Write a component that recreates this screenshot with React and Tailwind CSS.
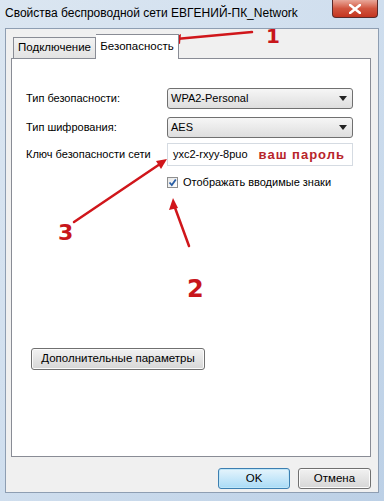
import React from 'react';

const font = { fontFamily: '"Liberation Sans", Arial, sans-serif' };
const hand = { fontFamily: '"DejaVu Sans", sans-serif' };

const Select = ({ value }) => (
    <div className="flex items-center justify-between h-[21px] w-[186px] rounded-[3px] border border-[#707070] bg-gradient-to-b from-[#f6f6f6] to-[#dedede] pl-[3px] pr-[5px]">
        <span className="text-[11px] text-black leading-none whitespace-nowrap">{value}</span>
        <svg width="8" height="5" viewBox="0 0 8 5"><path d="M0 0h8L4 5z" fill="#222" /></svg>
    </div>
);

const WinButton = ({ children, primary, className = '' }) => (
    <button className={`flex items-center justify-center h-[21px] rounded-[3px] border text-[11.5px] text-black leading-none whitespace-nowrap ${primary ? 'border-[#3c7fb1] bg-gradient-to-b from-[#e5f4fc] to-[#a9dbf6] shadow-[inset_0_0_0_1px_#bfe6f8]' : 'border-[#707070] bg-gradient-to-b from-[#f2f2f2] to-[#d6d6d6] shadow-[inset_0_0_0_1px_#fbfbfb]'} ${className}`}>
        {children}
    </button>
);

const Annotations = () => (
    <div className="absolute inset-0 pointer-events-none">
        <svg width="384" height="501" className="absolute inset-0">
            <g stroke="#d0161b" strokeWidth="2.5" strokeLinecap="round" fill="none">
                <path d="M252 32 L176 39" />
                <path d="M189 246 L174 205" />
                <path d="M74 222 L160 164" />
            </g>
            <g fill="#d0161b">
                <path d="M169 40 L181 34 L180 44 z" />
                <path d="M173 198 L169 210 L178 208 z" />
                <path d="M167 159 L161 169 L156 161 z" />
            </g>
        </svg>
        <span className="absolute left-[266px] top-[26px] text-[#c8161b] text-[20px] font-bold leading-none" style={hand}>1</span>
        <span className="absolute left-[187px] top-[277px] text-[#c8161b] text-[24px] font-bold leading-none" style={hand}>2</span>
        <span className="absolute left-[58px] top-[222px] text-[#c8161b] text-[22px] font-bold leading-none" style={hand}>3</span>
    </div>
);

export default function App() {
    return (
        <div className="relative w-[384px] h-[501px] overflow-hidden flex flex-col bg-gradient-to-br from-[#dbe6f1] via-[#cfdeee] to-[#bcd0e6]" style={font}>
            {/* title bar */}
            <div className="h-[28px] flex items-start justify-between pl-[5px]">
                <span className="mt-[7px] text-[12px] text-black leading-none whitespace-nowrap">Свойства беспроводной сети ЕВГЕНИЙ-ПК_Network</span>
                <div className="mr-[6px] w-[46px] h-[18px] rounded-b-[4px] border border-t-0 border-[#5a2a2a] bg-gradient-to-b from-[#e8a79a] via-[#d1553f] to-[#c3341f] flex items-center justify-center">
                    <svg width="12" height="10" viewBox="0 0 12 10">
                        <path d="M1 1 L11 9 M11 1 L1 9" stroke="#fff" strokeWidth="2.6" strokeLinecap="square" />
                    </svg>
                </div>
            </div>

            {/* client area */}
            <div className="mx-[5px] mb-[8px] flex-1 flex flex-col bg-[#f0f0f0] border border-[#8e9eb2] pl-[5px] pr-[7px]">
                {/* tabs */}
                <div className="flex items-end h-[29px] pl-[2px]">
                    <div className="h-[21px] w-[83px] flex items-center justify-center border border-b-0 border-[#898c95] bg-gradient-to-b from-[#f2f2f2] to-[#e3e3e3] text-[11.5px] leading-none">Подключение</div>
                    <div className="h-[25px] w-[83px] flex items-center justify-center border border-b-0 border-l-0 border-[#898c95] bg-white text-[11.5px] leading-none -mb-px relative z-10">Безопасность</div>
                </div>

                {/* panel */}
                <div className="flex-1 bg-white border border-[#898c95] flex flex-col pt-[29px] pl-[14px]">
                    <div className="flex items-center h-[21px]">
                        <span className="w-[141px] text-[11px] leading-none whitespace-nowrap">Тип безопасности:</span>
                        <Select value="WPA2-Personal" />
                    </div>
                    <div className="flex items-center h-[21px] mt-[8px]">
                        <span className="w-[141px] text-[11px] leading-none whitespace-nowrap">Тип шифрования:</span>
                        <Select value="AES" />
                    </div>
                    <div className="flex items-center h-[23px] mt-[5px]">
                        <span className="w-[141px] text-[11px] leading-none whitespace-nowrap">Ключ безопасности сети</span>
                        <div className="h-[23px] w-[186px] border border-[#d5dbe2] flex items-center pl-[5px] gap-[11px] whitespace-nowrap">
                            <span className="text-[11px] leading-none">yxc2-rxyy-8puo</span>
                            <span className="text-[13px] leading-none text-[#b8242a] tracking-[1px] font-semibold">ваш пароль</span>
                        </div>
                    </div>
                    <div className="flex items-center h-[12px] mt-[10px] ml-[141px] gap-[5px]">
                        <div className="w-[11px] h-[11px] border border-[#8e8f8f] bg-gradient-to-br from-[#e6e6e6] to-white flex items-center justify-center">
                            <svg width="9" height="9" viewBox="0 0 9 9"><path d="M1.5 4.5 L3.8 7 L7.8 1.5" stroke="#2a5fa5" strokeWidth="1.8" fill="none" /></svg>
                        </div>
                        <span className="text-[11px] leading-none whitespace-nowrap">Отображать вводимые знаки</span>
                    </div>

                    <div className="flex mt-[160px] ml-[5px]">
                        <WinButton className="w-[174px] h-[22px]">Дополнительные параметры</WinButton>
                    </div>
                </div>

                {/* footer buttons */}
                <div className="h-[35px] flex items-start justify-end gap-[8px] pt-[11px]">
                    <WinButton primary className="w-[72px]">OK</WinButton>
                    <WinButton className="w-[73px]">Отмена</WinButton>
                </div>
            </div>

            <Annotations />
        </div>
    );
}
